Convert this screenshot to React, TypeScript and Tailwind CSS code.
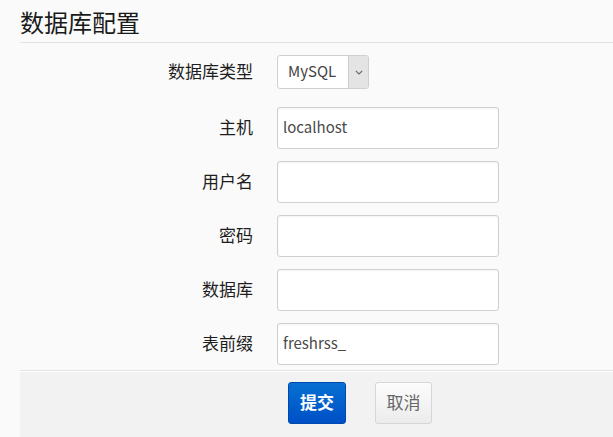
import React from "react";

const font = { fontFamily: '"Noto Sans CJK SC", "Noto Sans", sans-serif' };

function Row({ label, value }: { label: string; value?: string }) {
  return (
    <div className="flex h-[42px] items-center">
      <label className="w-[253px] pb-[3px] text-right text-[17px] text-[#1e1e1e]">{label}</label>
      <div className="ml-[24px] flex h-[42px] w-[222px] items-center rounded-[3px] border border-[#d0d0d0] bg-white px-[5px] pb-[1px] text-[15px] text-[#4a4a4a] shadow-[inset_0_1px_2px_rgba(0,0,0,0.05)]">
        {value}
      </div>
    </div>
  );
}

export default function App() {
  return (
    <div className="h-[437px] w-[613px] overflow-hidden bg-[#fafafa]" style={font}>
      <div className="ml-[20px] flex h-[43px] items-center border-b border-[#e3e3e3] pt-[1px] text-[24px] text-[#1a1a1a]">
        数据库配置
      </div>
      <div className="flex flex-col pt-[12px]">
        <div className="flex h-[34px] items-center">
          <label className="w-[253px] pb-[2px] text-right text-[17px] text-[#1e1e1e]">数据库类型</label>
          <div className="ml-[24px] flex h-[34px] w-[92px] overflow-hidden rounded-[3px] border border-[#d0d0d0] bg-white">
            <div className="flex flex-1 items-center pb-[1px] pl-[10px] text-[15px] text-[#444]">MySQL</div>
            <div className="flex w-[20px] items-center justify-center border-l border-[#cfcfcf] bg-[#e4e4e4]">
              <svg width="8" height="5" viewBox="0 0 8 5" fill="none">
                <path d="M0.8 0.8 L4 4 L7.2 0.8" stroke="#666" strokeWidth="1.1" />
              </svg>
            </div>
          </div>
        </div>
        <div className="mt-[18px] flex flex-col gap-[12px]">
          <Row label="主机" value="localhost" />
          <Row label="用户名" />
          <Row label="密码" />
          <Row label="数据库" />
          <Row label="表前缀" value="freshrss_" />
        </div>
      </div>
      <div className="ml-[20px] mt-[5px] h-[80px] border-t border-[#e2e2e2] bg-[#f2f2f2] pt-[11px] shadow-[inset_0_1px_0_#ffffff]">
        <div className="flex pl-[268px]">
          <button className="h-[42px] w-[58px] rounded-[3px] border border-[#0048b0] bg-gradient-to-b from-[#0a70d2] to-[#004fc6] pb-[2px] text-[17px] font-bold text-white">
            提交
          </button>
          <button className="ml-[29px] h-[42px] w-[57px] rounded-[3px] border border-[#d6d6d6] bg-gradient-to-b from-[#fcfcfc] to-[#ececec] pb-[2px] text-[17px] text-[#666]">
            取消
          </button>
        </div>
      </div>
    </div>
  );
}
